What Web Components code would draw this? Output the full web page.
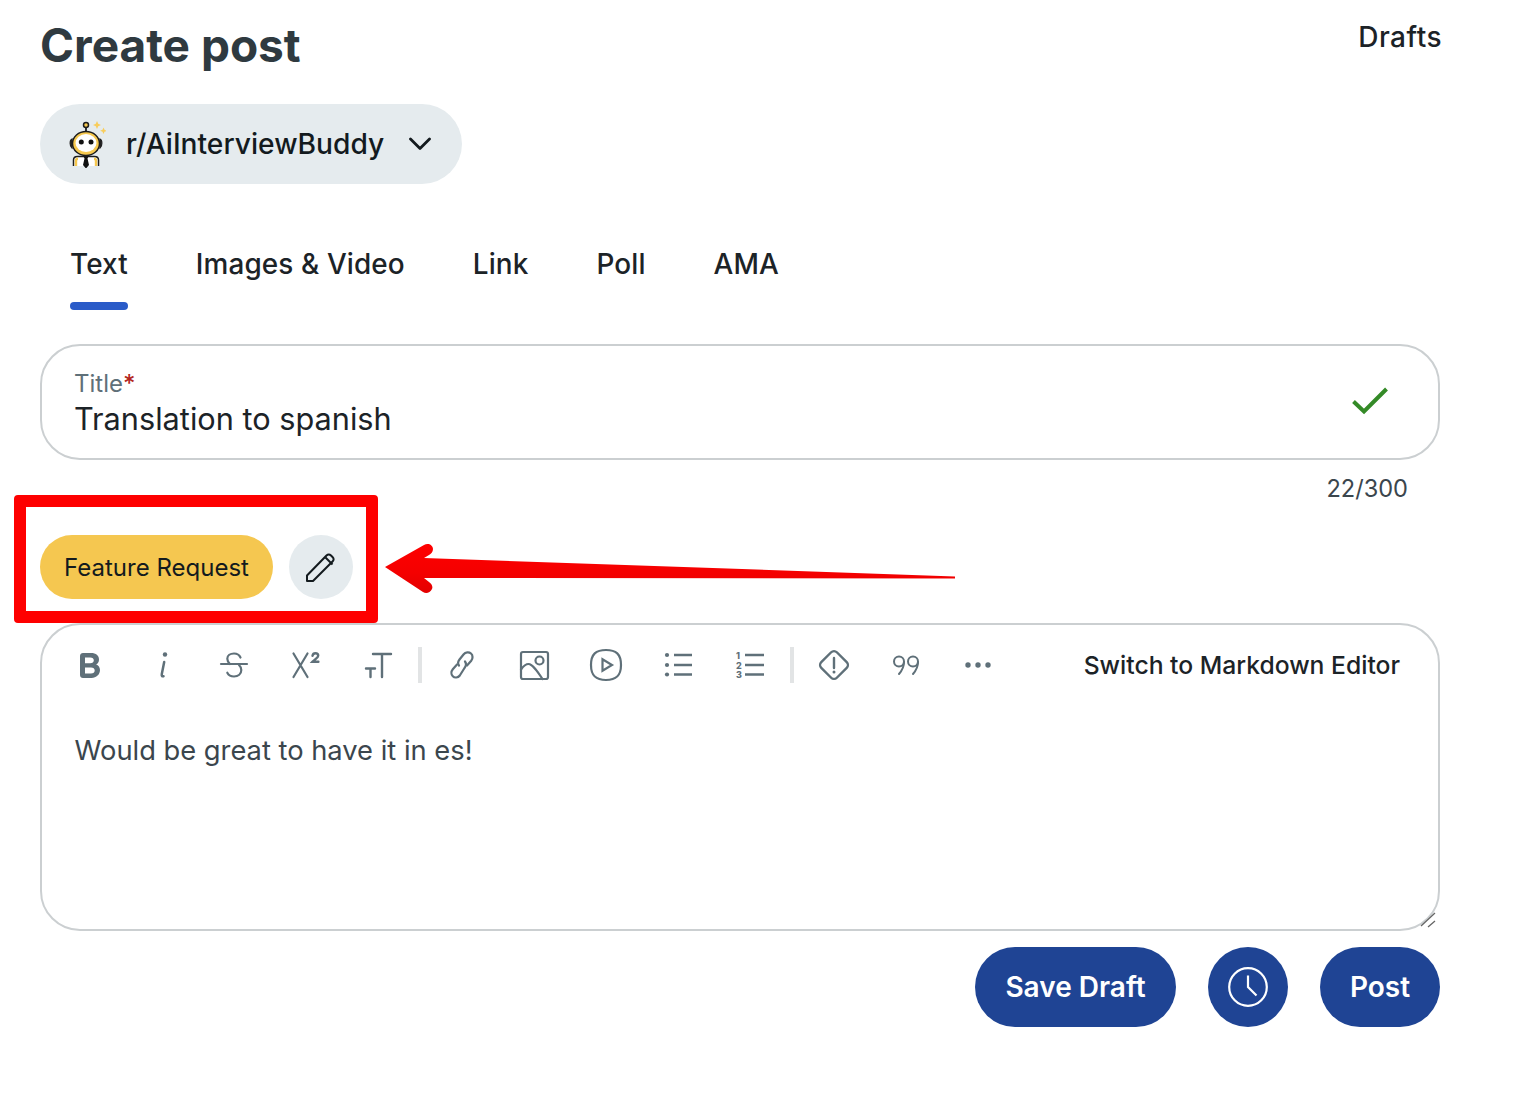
<!DOCTYPE html>
<html>
<head>
<meta charset="utf-8">
<title>Create post</title>
<style>
  html, body { margin: 0; background: #fff; }
  body { font-family: Inter, "Liberation Sans", sans-serif; color: #1c2327; }
</style>
</head>
<body>
<create-post-page></create-post-page>

<script>
// 工具栏图标
const INK = '#5f7079';
const numText = (y, n) => `<text x="0" y="${y}" font-size="9" font-weight="800" font-family="Inter, sans-serif" fill="${INK}" stroke="none">${n}</text>`;
const TOOL_ICONS = {
  bold: `<path fill-rule="evenodd" fill="${INK}" stroke="none" d="M3 0h8c5 0 8 2.600 8 6.500 0 2.400-1.100 4.100-2.900 5 2.400.8 3.900 3 3.900 5.600 0 4.400-3.500 7.900-8.500 7.900H3c-1.700 0-3-1.300-3-3V3c0-1.700 1.300-3 3-3zM5 4.500v5.700h5.200c2.300 0 3.600-1.100 3.600-2.900 0-1.700-1.300-2.800-3.600-2.800zM5 14.500v6h6c2.300 0 3.700-1.200 3.700-3s-1.400-3-3.700-3z"/>`,
  italic: `<circle cx="14" cy="2.500" r="2.200" fill="${INK}" stroke="none"/><path d="M13.200 10 10.800 22c-.3 1.700.3 2.700 1.700 2.200"/>`,
  strike: `<path d="M1 12h26"/><path d="M20.500 5.500C19.300 2.800 17 1.500 14 1.500c-3.700 0-6.700 2.200-6.700 5.300 0 2 1 3.600 2.600 5.200M19 13c1.500 1.400 2.300 3 2.300 5 0 3.900-3.200 6.500-7.300 6.500-3 0-5.400-1.300-6.700-3.800"/>`,
  sup: `<path d="M1.500 1.500 15.500 25M15.500 1.500 1.500 25"/><path d="M20.500 3.800c.3-1.500 1.300-2.500 2.900-2.500s2.800 1 2.800 2.400c0 1.800-2.600 3-5.600 6h5.800" stroke-width="2.400"/>`,
  size: `<path d="M8 2h18M17 2v23"/><path d="M1 16.500h9M5.500 16.500V25"/>`,
  link: `<path d="M8 14.500C6.500 12.500 7 10.500 8.500 8.500l4-5C14.500 1 18 .8 20 2.500c2 1.700 2 5 .2 7.200L16 14.500"/><path d="M14 10.500c1.500 2 1 4.500-.5 6.500l-4.700 7.500C7 27 3.500 27 1.800 25.300 0 23.500 0 20.500 1.800 18.300L6 13.500"/>`,
  image: `<rect x="1" y="1" width="27" height="27" rx="2"/><circle cx="19.500" cy="9.500" r="4"/><path d="M1 18.500c2.500-3.500 5-5.500 7.500-5.500 4 0 9 7.500 14 15"/>`,
  video: `<path d="M16 1C6 1 1 5 1 16s5 15 15 15 15-4 15-15S26 1 16 1z"/><path d="M12.500 10.200v11.600l9.500-5.800z"/>`,
  bullets: `<circle cx="3" cy="3" r="2.100" fill="${INK}" stroke="none"/><circle cx="3" cy="13" r="2.100" fill="${INK}" stroke="none"/><circle cx="3" cy="22.500" r="2.100" fill="${INK}" stroke="none"/><path d="M10 3h18M10 13h18M10 22.500h18" stroke-linecap="butt"/>`,
  numbers: `<path d="M9 3h19M9 13h19M9 22.500h19" stroke-linecap="butt"/>${numText(6.500, 1)}${numText(16.500, 2)}${numText(26, 3)}`,
  spoiler: `<rect x="5" y="5" width="22" height="22" rx="4" transform="rotate(45 16 16)"/><path d="M16 9v10"/><circle cx="16" cy="23" r="1.500" fill="${INK}" stroke="none"/>`,
  quote: `<circle cx="6" cy="6.500" r="5"/><circle cx="20" cy="6.500" r="5"/><path d="M11 7c0 4.500-2 8.500-5 12M25 7c0 4.500-2 8.500-5 12"/>`,
  more: `<circle cx="3" cy="3" r="2.700" fill="${INK}" stroke="none"/><circle cx="13" cy="3" r="2.700" fill="${INK}" stroke="none"/><circle cx="23" cy="3" r="2.700" fill="${INK}" stroke="none"/>`
};

class PostHeader extends HTMLElement {
  constructor() {
    super();
    this.attachShadow({ mode: 'open' });
    this.shadowRoot.innerHTML = `
      <style>
        :host { display: flex; justify-content: space-between; align-items: flex-start; height: 104px; }
        h1 { margin: 17px 0 0; font-size: 46px; line-height: 56px; font-weight: 700; color: #2f3a40; }
        a { margin: 19px -2px 0 0; font-size: 28px; line-height: 36px; font-weight: 500; letter-spacing: .5px; color: #1c2327; }
      </style>
      <h1>Create post</h1>
      <a>Drafts</a>
    `;
  }
}

class CommunityPicker extends HTMLElement {
  constructor() {
    super();
    this.attachShadow({ mode: 'open' });
    this.shadowRoot.innerHTML = `
      <style>
        :host { display: inline-flex; align-items: center; width: 422px; height: 80px; box-sizing: border-box;
          padding: 0 31px 0 26px; border-radius: 40px; background: #e5ebee; }
        svg { display: block; flex: none; }
        .logo { width: 40px; height: 48px; }
        span { margin-left: 20px; font-size: 28.200px; font-weight: 500; color: #131a1e; white-space: nowrap; flex: 1; }
      </style>
      <svg class="logo" viewBox="0 0 40 48">
        <path d="M20 8v4" stroke="#1c1c1c" stroke-width="1.800"/>
        <circle cx="20" cy="5" r="2.500" fill="#f6c84f" stroke="#1c1c1c" stroke-width="1.500"/>
        <path d="M31 1l1.200 2.800 2.800 1.200-2.800 1.200L31 9l-1.200-2.800L27 5l2.800-1.200zM37.500 7.500l1 2.300 2.300 1-2.300 1-1 2.300-1-2.300-2.300-1 2.300-1z" fill="#f8cd5c"/>
        <path d="M6 19c-2.500 1-2.500 7 0 9zM34 19c2.500 1 2.500 7 0 9z" fill="#222" stroke="#222" stroke-width="1.200"/>
        <ellipse cx="20" cy="23.500" rx="13.500" ry="12" fill="#f6c84f" stroke="#1c1c1c" stroke-width="1.500"/>
        <ellipse cx="20" cy="23" rx="10.500" ry="9" fill="#fff"/>
        <circle cx="15.300" cy="22" r="2.500" fill="#111"/>
        <circle cx="25" cy="22" r="2.500" fill="#111"/>
        <path d="M7.500 46v-6c0-2.500 1.500-3.500 4-3.500h17c2.500 0 4 1 4 3.500v6" fill="#fff" stroke="#1c1c1c" stroke-width="1.500"/>
        <path d="M10 46v-5.500c0-1 .6-1.800 2-1.800M30 46v-5.500c0-1-.6-1.800-2-1.800" fill="none" stroke="#f6c84f" stroke-width="2.400"/>
        <path d="M17.500 36.500h5l-1 2 1.500 6.500-3 3.500-3-3.500 1.500-6.500z" fill="#111"/>
      </svg>
      <span>r/AiInterviewBuddy</span>
      <svg width="22" height="14" viewBox="0 0 22 14" fill="none" stroke="#131a1e" stroke-width="2.800" stroke-linecap="round" stroke-linejoin="round"><path d="M1.500 2 11 11.500 20.500 2"/></svg>
    `;
  }
}

class PostTabs extends HTMLElement {
  constructor() {
    super();
    this.attachShadow({ mode: 'open' });
    const tabs = JSON.parse(this.getAttribute('tabs') || '[]');
    this.shadowRoot.innerHTML = `
      <style>
        :host { display: flex; gap: 68px; padding-left: 30px; height: 92px; margin-top: 36px; }
        div { position: relative; height: 90px; line-height: 88px; font-size: 27.900px; letter-spacing: .12px; font-weight: 500; color: #1c2327; white-space: nowrap; }
        .active::after { content: ""; position: absolute; left: 0; right: 0; top: 82px; height: 8px; border-radius: 4px; background: #2a5bc8; }
      </style>
      ${tabs.map((t, i) => `<div class="${i === 0 ? 'active' : ''}">${t}</div>`).join('')}
    `;
  }
}

class TitleField extends HTMLElement {
  constructor() {
    super();
    this.attachShadow({ mode: 'open' });
    this.shadowRoot.innerHTML = `
      <style>
        :host { display: flex; align-items: center; justify-content: space-between; box-sizing: border-box;
          height: 116px; padding: 0 50px 0 32px; border: 2px solid #cbcfd1; border-radius: 40px; margin-top: 32px; }
        .text { margin-top: 6px; }
        .label { font-size: 24px; line-height: 28px; color: #5f7079; }
        .label b { color: #b3261e; font-weight: 500; }
        .value { font-size: 30.700px; line-height: 42px; color: #1c2327; }
        svg { display: block; margin-top: -2px; }
      </style>
      <div class="text">
        <div class="label">Title<b>*</b></div>
        <div class="value"><slot></slot></div>
      </div>
      <svg width="36" height="28" viewBox="0 0 36 28" fill="none" stroke="#348a27" stroke-width="4"><path d="M1.500 14.500 12 24.500 34.500 2"/></svg>
    `;
  }
}

class CharCounter extends HTMLElement {
  constructor() {
    super();
    this.attachShadow({ mode: 'open' });
    this.shadowRoot.innerHTML = `
      <style>
        :host { display: block; text-align: right; padding-right: 32px; margin-top: 12px; height: 34px; line-height: 34px;
          font-size: 23.600px; color: #3b464d; }
      </style>
      <slot></slot>
    `;
  }
}

class FlairRow extends HTMLElement {
  constructor() {
    super();
    this.attachShadow({ mode: 'open' });
    this.shadowRoot.innerHTML = `
      <style>
        :host { display: flex; gap: 16px; margin-top: 29px; }
        .flair { width: 233px; height: 64px; border-radius: 32px; background: #f5c750; display: flex; align-items: center; justify-content: center;
          font-size: 24px; color: #131a1e; white-space: nowrap; }
        .edit { width: 64px; height: 64px; border-radius: 50%; background: #e5ebee; display: flex; align-items: center; justify-content: center; }
      </style>
      <div class="flair"><slot></slot></div>
      <div class="edit">
        <svg width="30" height="30" viewBox="0 0 30 30" fill="none" stroke="#131a1e" stroke-width="2" stroke-linejoin="round">
          <path d="M1 23.500 20.500 3.500c1.500-1.500 3-1.500 4.500 0l1.500 1.500c1.500 1.500 1.500 3 0 4.500L7 29H1z"/>
          <path d="M19.500 5.500l7 7"/>
        </svg>
      </div>
    `;
  }
}

class ToolButton extends HTMLElement {
  constructor() {
    super();
    this.attachShadow({ mode: 'open' });
    const w = this.getAttribute('w') || 32;
    const h = this.getAttribute('h') || 32;
    const sw = this.getAttribute('sw') || 2.200;
    this.shadowRoot.innerHTML = `
      <style>
        :host { display: flex; align-items: center; justify-content: center; width: 72px; height: 60px; flex: none; }
        svg { display: block; overflow: visible; }
      </style>
      <svg width="${w}" height="${h}" viewBox="0 0 ${w} ${h}" fill="none" stroke="${INK}" stroke-width="${sw}" stroke-linecap="round">${TOOL_ICONS[this.getAttribute('icon')]}</svg>
    `;
  }
}

class ToolSep extends HTMLElement {
  constructor() {
    super();
    this.attachShadow({ mode: 'open' });
    this.shadowRoot.innerHTML = `
      <style>
        :host { display: block; flex: none; width: 12px; height: 36px; }
        div { width: 4px; height: 36px; margin: 0 auto; background: #e2e4e5; }
      </style>
      <div></div>
    `;
  }
}

class PostEditor extends HTMLElement {
  constructor() {
    super();
    this.attachShadow({ mode: 'open' });
    this.shadowRoot.innerHTML = `
      <style>
        :host { display: block; position: relative; box-sizing: border-box; height: 308px; margin-top: 24px;
          border: 2px solid #cbcfd1; border-radius: 40px; background: #fff; }
        .bar { display: flex; align-items: center; height: 80px; padding: 0 38px 0 12px; }
        .bar a { margin-left: auto; font-size: 24.680px; font-weight: 500; color: #1c2327; white-space: nowrap; }
        .body { padding: 24px 32.500px; font-size: 27.300px; line-height: 43px; color: #3b464d; }
        .grip { position: absolute; right: 2px; bottom: 1px; }
      </style>
      <div class="bar"><slot name="tools"></slot><a>Switch to Markdown Editor</a></div>
      <div class="body"><slot></slot></div>
      <svg class="grip" width="16" height="16" viewBox="0 0 16 16" stroke="#666" stroke-width="1.300"><path d="M1 14 15 1M8 15l7-6"/></svg>
    `;
  }
}

class PostActions extends HTMLElement {
  constructor() {
    super();
    this.attachShadow({ mode: 'open' });
    this.shadowRoot.innerHTML = `
      <style>
        :host { display: flex; justify-content: flex-end; gap: 32px; margin-top: 16px; }
        div { height: 80px; border-radius: 40px; background: #1f4494; color: #fff; display: flex; align-items: center; justify-content: center;
          font-size: 28px; font-weight: 600; box-sizing: border-box; }
        .save { width: 201px; }
        .clock { width: 80px; }
        .post { width: 120px; }
      </style>
      <div class="save">Save Draft</div>
      <div class="clock">
        <svg width="40" height="40" viewBox="0 0 40 40" fill="none" stroke="#fff" stroke-width="2.200"><circle cx="20" cy="20" r="18.800"/><path d="M20 8.500V20l8.500 8.500"/></svg>
      </div>
      <div class="post">Post</div>
    `;
  }
}

// 红框和箭头标注
class MarkupLayer extends HTMLElement {
  constructor() {
    super();
    this.attachShadow({ mode: 'open' });
    this.shadowRoot.innerHTML = `
      <style>
        :host { position: absolute; inset: 0; pointer-events: none; display: block; }
        .box { position: absolute; left: 14px; top: 495px; width: 340px; height: 104px; border: 12px solid #fe0000; border-radius: 4px; }
        svg { position: absolute; left: 0; top: 0; }
      </style>
      <div class="box"></div>
      <svg width="1522" height="1116" viewBox="0 0 1522 1116">
        <defs><linearGradient id="a" gradientUnits="userSpaceOnUse" x1="0" y1="545" x2="0" y2="592"><stop offset="0" stop-color="#fe0000"/><stop offset=".6" stop-color="#f40000"/><stop offset="1" stop-color="#e40000"/></linearGradient></defs>
        <path d="M385 567 424 545c4-2.500 9 0 9 4 0 3-2 5-4 6l-5 3 531 18.500v2L424 578l5 4c3 2 4 5 3 7-2 4-6 5-9 3z" fill="url(#a)"/>
      </svg>
    `;
  }
}

class CreatePostPage extends HTMLElement {
  constructor() {
    super();
    this.attachShadow({ mode: 'open' });
    this.shadowRoot.innerHTML = `
      <style>
        :host { display: block; position: relative; box-sizing: border-box; width: 1522px; height: 1116px; padding: 0 82px 0 40px; overflow: hidden; }
      </style>
      <post-header></post-header>
      <community-picker></community-picker>
      <post-tabs tabs='["Text","Images &amp; Video","Link","Poll","AMA"]'></post-tabs>
      <title-field>Translation to spanish</title-field>
      <char-counter>22/300</char-counter>
      <flair-row>Feature Request</flair-row>
      <post-editor>
        <tool-button slot="tools" icon="bold" w="20" h="25"></tool-button>
        <tool-button slot="tools" icon="italic" w="22" h="26" sw="2.500"></tool-button>
        <tool-button slot="tools" icon="strike" w="28" h="26"></tool-button>
        <tool-button slot="tools" icon="sup" w="28" h="26"></tool-button>
        <tool-button slot="tools" icon="size" w="27" h="26" sw="2.400"></tool-button>
        <tool-sep slot="tools"></tool-sep>
        <tool-button slot="tools" icon="link" w="22" h="28"></tool-button>
        <tool-button slot="tools" icon="image" w="29" h="29"></tool-button>
        <tool-button slot="tools" icon="video" w="32" h="32"></tool-button>
        <tool-button slot="tools" icon="bullets" w="29" h="26" sw="2.400"></tool-button>
        <tool-button slot="tools" icon="numbers" w="29" h="26" sw="2.400"></tool-button>
        <tool-sep slot="tools"></tool-sep>
        <tool-button slot="tools" icon="spoiler" w="32" h="32" sw="2.400"></tool-button>
        <tool-button slot="tools" icon="quote" w="27" h="20" sw="2"></tool-button>
        <tool-button slot="tools" icon="more" w="26" h="6"></tool-button>
        Would be great to have it in es!
      </post-editor>
      <post-actions></post-actions>
      <markup-layer></markup-layer>
    `;
  }
}

customElements.define('post-header', PostHeader);
customElements.define('community-picker', CommunityPicker);
customElements.define('post-tabs', PostTabs);
customElements.define('title-field', TitleField);
customElements.define('char-counter', CharCounter);
customElements.define('flair-row', FlairRow);
customElements.define('tool-button', ToolButton);
customElements.define('tool-sep', ToolSep);
customElements.define('post-editor', PostEditor);
customElements.define('post-actions', PostActions);
customElements.define('markup-layer', MarkupLayer);
customElements.define('create-post-page', CreatePostPage);
</script>
</body>
</html>
